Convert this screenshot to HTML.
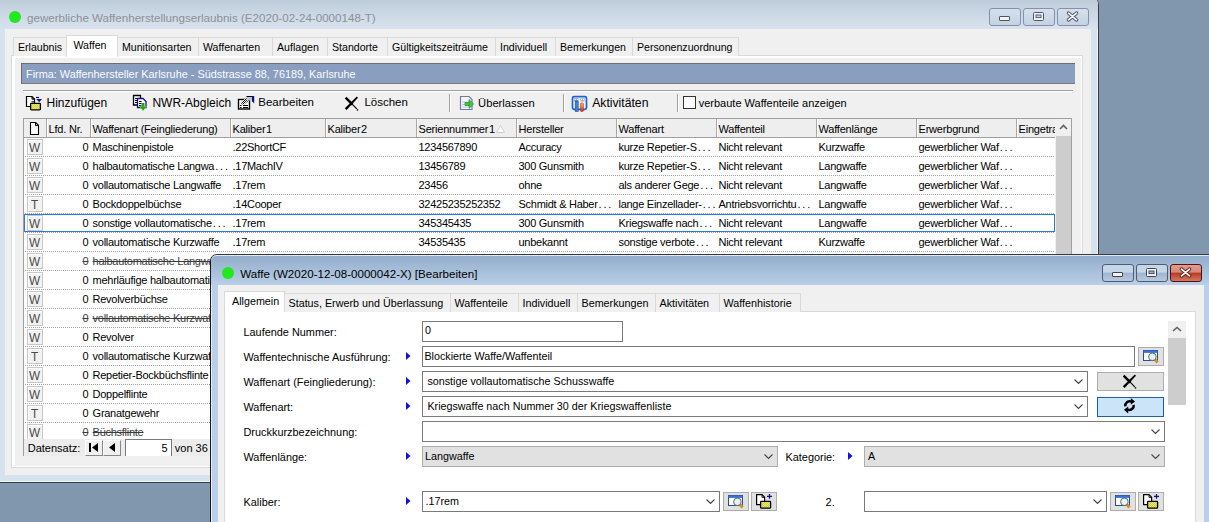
<!DOCTYPE html><html><head><meta charset="utf-8"><style>
*{box-sizing:border-box;margin:0;padding:0}
html,body{width:1209px;height:522px;overflow:hidden;background:#8097ae;font-family:"Liberation Sans",sans-serif;font-size:11px;color:#000}
.a{position:absolute}
.t{position:absolute;white-space:nowrap;line-height:1}
.wb{position:absolute;height:18px;width:32px;border:1px solid #8591aa;border-radius:3px;background:linear-gradient(#d5e0ec,#c4d2e2)}
svg{position:absolute;overflow:visible}
</style></head><body>
<div class="a" style="left:0px;top:-3px;width:1099px;height:486px;background:#d7e2ef;border-right:1px solid #3c3c3c;border-bottom:1px solid #3c3c3c;border-top-right-radius:8px"></div>
<div class="a" style="left:1097px;top:3px;width:1px;height:479px;background:#eef4fb"></div>
<div class="a" style="left:0px;top:481px;width:1098px;height:1px;background:#eef4fb"></div>
<div class="a" style="left:0px;top:-3px;width:1098px;height:32px;background:linear-gradient(#bccad8,#d8e3ef);border-top-right-radius:7px"></div>
<div class="a" style="left:9px;top:11px;width:12px;height:12px;border-radius:50%;background:#22e822"></div>
<div class="t" style="left:27px;top:12.18px;font-size:11.6px;color:#8c9096;">gewerbliche Waffenherstellungserlaubnis (E2020-02-24-0000148-T)</div>
<div class="wb" style="left:989px;top:8px"></div>
<div class="wb" style="left:1023px;top:8px"></div>
<div class="wb" style="left:1057px;top:8px"></div>
<div class="a" style="left:999px;top:16px;width:11px;height:5px;background:#f2f2f2;border:1px solid #4e5566;border-radius:1px"></div>
<svg style="left:1033px;top:12px" width="12" height="9"><rect x="0.5" y="0.5" width="10" height="8" rx="1" fill="#f2f2f2" stroke="#4e5566"/><rect x="3" y="3" width="5" height="2.6" fill="#c9d4e2" stroke="#4e5566" stroke-width="0.9"/></svg>
<svg style="left:1067px;top:12px" width="11" height="9"><path d="M1.5 1.2 L9.5 7.8 M9.5 1.2 L1.5 7.8" stroke="#4e5566" stroke-width="3.6" stroke-linecap="round"/><path d="M1.5 1.2 L9.5 7.8 M9.5 1.2 L1.5 7.8" stroke="#f6f6f6" stroke-width="1.7" stroke-linecap="round"/></svg>
<div class="a" style="left:5px;top:29px;width:1086px;height:446px;background:#f0f0f0"></div>
<div class="a" style="left:11px;top:55px;width:1072px;height:413px;border:1px solid #d9d9d9;background:#f0f0f0"></div>
<div class="a" style="left:12px;top:56px;width:3px;height:411px;background:#fff"></div>
<div class="a" style="left:12px;top:56px;width:1070px;height:2px;background:#fff"></div>
<div class="a" style="left:1081px;top:56px;width:1px;height:411px;background:#fff"></div>
<div class="a" style="left:12px;top:466px;width:1070px;height:1px;background:#fff"></div>
<div class="a" style="left:13px;top:37px;width:54px;height:19px;border:1px solid #d9d9d9;border-bottom:none;background:#f0f0f0"></div>
<div class="t" style="left:18px;top:41.83px;font-size:10.6px;color:#000;">Erlaubnis</div>
<div class="a" style="left:117px;top:37px;width:82px;height:19px;border:1px solid #d9d9d9;border-bottom:none;background:#f0f0f0"></div>
<div class="t" style="left:122px;top:41.83px;font-size:10.6px;color:#000;">Munitionsarten</div>
<div class="a" style="left:198px;top:37px;width:75px;height:19px;border:1px solid #d9d9d9;border-bottom:none;background:#f0f0f0"></div>
<div class="t" style="left:203px;top:41.83px;font-size:10.6px;color:#000;">Waffenarten</div>
<div class="a" style="left:272px;top:37px;width:56px;height:19px;border:1px solid #d9d9d9;border-bottom:none;background:#f0f0f0"></div>
<div class="t" style="left:277px;top:41.83px;font-size:10.6px;color:#000;">Auflagen</div>
<div class="a" style="left:327px;top:37px;width:61px;height:19px;border:1px solid #d9d9d9;border-bottom:none;background:#f0f0f0"></div>
<div class="t" style="left:332px;top:41.83px;font-size:10.6px;color:#000;">Standorte</div>
<div class="a" style="left:387px;top:37px;width:109px;height:19px;border:1px solid #d9d9d9;border-bottom:none;background:#f0f0f0"></div>
<div class="t" style="left:392px;top:41.83px;font-size:10.6px;color:#000;">Gültigkeitszeiträume</div>
<div class="a" style="left:495px;top:37px;width:61px;height:19px;border:1px solid #d9d9d9;border-bottom:none;background:#f0f0f0"></div>
<div class="t" style="left:500px;top:41.83px;font-size:10.6px;color:#000;">Individuell</div>
<div class="a" style="left:555px;top:37px;width:78px;height:19px;border:1px solid #d9d9d9;border-bottom:none;background:#f0f0f0"></div>
<div class="t" style="left:560px;top:41.83px;font-size:10.6px;color:#000;">Bemerkungen</div>
<div class="a" style="left:632px;top:37px;width:107px;height:19px;border:1px solid #d9d9d9;border-bottom:none;background:#f0f0f0"></div>
<div class="t" style="left:637px;top:41.83px;font-size:10.6px;color:#000;">Personenzuordnung</div>
<div class="a" style="left:66px;top:35px;width:52px;height:22px;border:1px solid #d9d9d9;border-bottom:none;background:#fff"></div>
<div class="t" style="left:73.5px;top:39.73px;font-size:10.6px;color:#000;">Waffen</div>
<div class="a" style="left:21px;top:63px;width:1054px;height:21px;background:#8a9ec0;border-top:1px solid #6e6e6e;border-left:1px solid #6e6e6e;border-bottom:1px solid #7a7a7a"></div>
<div class="t" style="left:26px;top:68.81px;font-size:10.86px;color:#fafcff;">Firma: Waffenhersteller Karlsruhe - Südstrasse 88, 76189, Karlsruhe</div>
<div class="a" style="left:23px;top:90px;width:1050px;height:1px;background:#a0a0a0"></div>
<div class="a" style="left:23px;top:91px;width:1050px;height:1px;background:#fff"></div>
<div class="t" style="left:46.5px;top:96.84px;font-size:12px;color:#000;">Hinzufügen</div>
<div class="t" style="left:152.4px;top:96.84px;font-size:12px;color:#000;">NWR-Abgleich</div>
<div class="t" style="left:258.3px;top:97.27px;font-size:11.5px;color:#000;">Bearbeiten</div>
<div class="t" style="left:364.4px;top:97.27px;font-size:11.5px;color:#000;">Löschen</div>
<div class="t" style="left:478.1px;top:97.52px;font-size:11.2px;color:#000;">Überlassen</div>
<div class="t" style="left:592.2px;top:96.67px;font-size:12.2px;color:#000;">Aktivitäten</div>
<div class="a" style="left:449px;top:94px;width:1px;height:18px;background:#a0a0a0"></div>
<div class="a" style="left:450px;top:94px;width:1px;height:18px;background:#fff"></div>
<div class="a" style="left:563px;top:94px;width:1px;height:18px;background:#a0a0a0"></div>
<div class="a" style="left:564px;top:94px;width:1px;height:18px;background:#fff"></div>
<div class="a" style="left:677px;top:94px;width:1px;height:18px;background:#a0a0a0"></div>
<div class="a" style="left:678px;top:94px;width:1px;height:18px;background:#fff"></div>
<div class="a" style="left:683px;top:96px;width:13px;height:13px;border:1px solid #333;background:#fff"></div>
<div class="t" style="left:698.7px;top:97.69px;font-size:11px;color:#000;">verbaute Waffenteile anzeigen</div>
<svg style="left:344px;top:96px" width="15" height="15" viewBox="0 0 15 15"><path d="M0.8 2.4 L2.4 0.8 L9.4 7.6 L7.6 9.4 z" fill="#000"/><path d="M7.8 7.0 L13.2 12.4 L12.4 13.2 L7.0 7.8z" fill="#000"/><rect x="12.8" y="13.2" width="1.4" height="1.4" fill="#000"/><path d="M14 1.8 L12.8 0.6 L0.8 12.2 L2.6 14 z" fill="#000"/></svg>

<svg style="left:25px;top:95px" width="18" height="17"><defs><pattern id="ydot" width="2" height="2" patternUnits="userSpaceOnUse"><rect width="2" height="2" fill="#f8f800"/><rect width="1" height="1" fill="#c0c0b0"/><rect x="1" y="1" width="1" height="1" fill="#c0c0b0"/></pattern></defs><path d="M1.5 1.5 H7 L9.5 4 V11.5 H1.5 Z" fill="#fff" stroke="#000" stroke-width="1.2"/><path d="M7 1.8 V4.2 H9.4" fill="none" stroke="#000" stroke-width="1"/><path d="M6.5 6.8 h3 v1.5" fill="#e8e830" stroke="#000" stroke-width="1"/><rect x="5.6" y="8.3" width="9.8" height="6.5" rx="0.8" fill="url(#ydot)" stroke="#000" stroke-width="1.3"/><path d="M11 2.5 h3" stroke="#10108a" stroke-width="1.2"/><path d="M11.3 4 L17 4 L14.2 7.2 z" fill="#10108a"/></svg>
<svg style="left:132px;top:94px" width="17" height="18"><path d="M1.5 1.5 H8.5 V11 H1.5 Z" fill="#fff" stroke="#000" stroke-width="1.3"/><path d="M3 4.5 h3 M3 6.5 h3 M3 8.5 h3" stroke="#000"/><path d="M5.5 4.5 H11 L14 7.5 V13.5 H5.5 Z" fill="#fff" stroke="#10108a" stroke-width="1.3"/><path d="M7 7.5 h2.5 M7 9.5 h2.5 M7 11.5 h2.5" stroke="#000"/><rect x="9.6" y="9" width="2.8" height="4" fill="#1f9a1f"/><path d="M7.6 12.2 L14.6 12.2 L11 16.8 z" fill="#1f9a1f" stroke="#7ae03a" stroke-width="0.6"/></svg>
<svg style="left:237px;top:95px" width="19" height="16"><defs><pattern id="chk" width="2" height="2" patternUnits="userSpaceOnUse"><rect width="2" height="2" fill="#fff"/><rect width="1" height="1" fill="#000"/><rect x="1" y="1" width="1" height="1" fill="#000"/></pattern></defs><rect x="1.5" y="4.5" width="11" height="9.5" fill="#fff" stroke="#000" stroke-width="1.4"/><path d="M3 10.5 h1.6 M6 10.5 h5 M3 12.5 h1.6 M6 12.5 h5" stroke="#000"/><path d="M3.5 8 L9.5 2 L12.5 5 L6.5 10 z" fill="url(#chk)"/><rect x="9.5" y="2" width="5.5" height="3.5" fill="#c4c4c4"/><path d="M9.5 1.5 H15" stroke="#000" stroke-width="1"/><path d="M15 1 h2.2 v7.4 l-1.1 -1.2 l-1.1 -0.6 z" fill="#10108a"/></svg>
<svg style="left:459px;top:95px" width="16" height="16"><path d="M1.5 1.5 H10 L13 4.5 V14.5 H1.5 Z" fill="#f4f5fb" stroke="#6c7ca6" stroke-width="1.2"/><path d="M3 7 h5 M3 9.5 h3 M3 12 h6" stroke="#c0c8e0"/><rect x="6" y="7.4" width="4.5" height="3.2" fill="#46c846" stroke="#1a8a1a" stroke-width="0.6"/><path d="M10 4.6 L14.6 9 L10 13.4 z" fill="#46c846" stroke="#1a8a1a" stroke-width="0.7"/></svg>
<svg style="left:571px;top:95px" width="17" height="17"><defs><linearGradient id="og" x1="0" y1="0" x2="0" y2="1"><stop offset="0" stop-color="#ffc040"/><stop offset="1" stop-color="#d82a10"/></linearGradient></defs><rect x="1.5" y="1.6" width="14" height="12.8" rx="1.6" fill="#eef5fe" stroke="#1c64d8" stroke-width="1.7"/><path d="M2.6 3.2 h5 l-0.6 3.2 h-3.6 z" fill="#a4a4a4"/><path d="M8.6 3.2 h5.6 l-1 3.4 h-3.6 z" fill="#b0b0b0"/><path d="M3.6 4 h1 v1 h-1z M6 4 h1 v1 h-1z M10 4 h1 v1 h-1z M12.2 4 h1 v1 h-1z" fill="#fff"/><rect x="4.2" y="6" width="3" height="10.5" fill="#3c82dc" stroke="#1d4a90" stroke-width="0.6"/><rect x="9.4" y="8" width="3" height="8.5" rx="1" fill="url(#og)" stroke="#a02010" stroke-width="0.5"/></svg>

<div class="a" style="left:23px;top:118px;width:1049px;height:338px;border:1px solid #a0a0a0;border-bottom:none;background:#fff"></div>
<div class="a" style="left:24px;top:119px;width:1031px;height:19px;background:#eeeeee;border-bottom:1px solid #a0a0a0"></div>
<div class="a" style="left:46px;top:119px;width:1px;height:18px;background:#a9a9a9"></div>
<div class="a" style="left:47px;top:119px;width:1px;height:18px;background:#fff"></div>
<div class="a" style="left:90px;top:119px;width:1px;height:18px;background:#a9a9a9"></div>
<div class="a" style="left:91px;top:119px;width:1px;height:18px;background:#fff"></div>
<div class="a" style="left:230px;top:119px;width:1px;height:18px;background:#a9a9a9"></div>
<div class="a" style="left:231px;top:119px;width:1px;height:18px;background:#fff"></div>
<div class="a" style="left:325px;top:119px;width:1px;height:18px;background:#a9a9a9"></div>
<div class="a" style="left:326px;top:119px;width:1px;height:18px;background:#fff"></div>
<div class="a" style="left:416px;top:119px;width:1px;height:18px;background:#a9a9a9"></div>
<div class="a" style="left:417px;top:119px;width:1px;height:18px;background:#fff"></div>
<div class="a" style="left:516px;top:119px;width:1px;height:18px;background:#a9a9a9"></div>
<div class="a" style="left:517px;top:119px;width:1px;height:18px;background:#fff"></div>
<div class="a" style="left:616px;top:119px;width:1px;height:18px;background:#a9a9a9"></div>
<div class="a" style="left:617px;top:119px;width:1px;height:18px;background:#fff"></div>
<div class="a" style="left:716px;top:119px;width:1px;height:18px;background:#a9a9a9"></div>
<div class="a" style="left:717px;top:119px;width:1px;height:18px;background:#fff"></div>
<div class="a" style="left:816px;top:119px;width:1px;height:18px;background:#a9a9a9"></div>
<div class="a" style="left:817px;top:119px;width:1px;height:18px;background:#fff"></div>
<div class="a" style="left:916px;top:119px;width:1px;height:18px;background:#a9a9a9"></div>
<div class="a" style="left:917px;top:119px;width:1px;height:18px;background:#fff"></div>
<div class="a" style="left:1016px;top:119px;width:1px;height:18px;background:#a9a9a9"></div>
<div class="a" style="left:1017px;top:119px;width:1px;height:18px;background:#fff"></div>
<div class="t" style="left:48.5px;top:123.69px;font-size:11px;color:#000;letter-spacing:-0.2px">Lfd. Nr.</div>
<div class="t" style="left:92.5px;top:123.69px;font-size:11px;color:#000;letter-spacing:-0.2px">Waffenart (Feingliederung)</div>
<div class="t" style="left:232.5px;top:123.69px;font-size:11px;color:#000;letter-spacing:-0.2px">Kaliber&#8202;1</div>
<div class="t" style="left:327.5px;top:123.69px;font-size:11px;color:#000;letter-spacing:-0.2px">Kaliber&#8202;2</div>
<div class="t" style="left:418.5px;top:123.69px;font-size:11px;color:#000;letter-spacing:-0.2px">Seriennummer&#8202;1</div>
<div class="t" style="left:518.5px;top:123.69px;font-size:11px;color:#000;letter-spacing:-0.2px">Hersteller</div>
<div class="t" style="left:618.5px;top:123.69px;font-size:11px;color:#000;letter-spacing:-0.2px">Waffenart</div>
<div class="t" style="left:718.5px;top:123.69px;font-size:11px;color:#000;letter-spacing:-0.2px">Waffenteil</div>
<div class="t" style="left:818.5px;top:123.69px;font-size:11px;color:#000;letter-spacing:-0.2px">Waffenlänge</div>
<div class="t" style="left:918.5px;top:123.69px;font-size:11px;color:#000;letter-spacing:-0.2px">Erwerbgrund</div>
<div class="t" style="left:1018.5px;top:123.69px;font-size:11px;color:#000;letter-spacing:-0.2px">Eingetra</div>
<svg style="left:29px;top:122px" width="12" height="13"><path d="M1.5 0.5h5.2l2.8 2.8v9.2h-8z" fill="#fff" stroke="#000" stroke-width="1.1"/><path d="M6.5 0.8v2.8h2.8" fill="none" stroke="#000" stroke-width="1"/></svg>
<svg style="left:496px;top:125px" width="10" height="8"><path d="M0.5 7.5 L4.5 0.5 L8.5 7.5z" fill="#fcfcfc" stroke="#cfcfcf"/></svg>
<div class="a" style="left:1055px;top:119px;width:16px;height:336px;background:#f0f0f0"></div>
<div class="a" style="left:1056px;top:136px;width:15px;height:119px;background:#cdcdcd"></div>
<svg style="left:1059px;top:124px" width="9" height="6"><path d="M1 5 L4.5 1.5 L8 5" fill="none" stroke="#606060" stroke-width="1.6"/></svg>
<div class="a" style="left:1071px;top:118px;width:1px;height:338px;background:#a0a0a0"></div>
<div class="a" style="left:24px;top:156px;width:1031px;height:1px;background-image:repeating-linear-gradient(90deg,transparent 0 1px,#a0a0a0 1px 2px)"></div>
<div class="a" style="left:27px;top:139px;width:16px;height:16px;border:1px solid #c8c8c8;background:#f2f2f2;box-shadow:inset 1px 1px 0 #fff"></div>
<div class="t" style="left:28.8px;top:141.50px;font-size:12.4px;color:#4a4a4a;transform:scaleX(0.95);transform-origin:0 0">W</div>
<div class="t" style="left:82.5px;top:141.69px;font-size:11px;color:#000;letter-spacing:-0.27px">0</div>
<div class="t" style="left:92.6px;top:141.69px;font-size:11px;color:#000;letter-spacing:-0.27px">Maschinenpistole</div>
<div class="t" style="left:232.5px;top:141.69px;font-size:11px;color:#000;letter-spacing:-0.27px">.22ShortCF</div>
<div class="t" style="left:418.5px;top:141.69px;font-size:11px;color:#000;letter-spacing:-0.27px">1234567890</div>
<div class="t" style="left:518.5px;top:141.69px;font-size:11px;color:#000;letter-spacing:-0.27px">Accuracy</div>
<div class="t" style="left:618.5px;top:141.69px;font-size:11px;color:#000;letter-spacing:-0.27px">kurze Repetier-S<span style="letter-spacing:1.8px;margin-left:1px">...</span></div>
<div class="t" style="left:718.5px;top:141.69px;font-size:11px;color:#000;letter-spacing:-0.27px">Nicht relevant</div>
<div class="t" style="left:818.5px;top:141.69px;font-size:11px;color:#000;letter-spacing:-0.27px">Kurzwaffe</div>
<div class="t" style="left:918.5px;top:141.69px;font-size:11px;color:#000;letter-spacing:-0.27px">gewerblicher Waf<span style="letter-spacing:1.8px;margin-left:1px">...</span></div>
<div class="a" style="left:24px;top:175px;width:1031px;height:1px;background-image:repeating-linear-gradient(90deg,transparent 0 1px,#a0a0a0 1px 2px)"></div>
<div class="a" style="left:27px;top:158px;width:16px;height:16px;border:1px solid #c8c8c8;background:#f2f2f2;box-shadow:inset 1px 1px 0 #fff"></div>
<div class="t" style="left:28.8px;top:160.50px;font-size:12.4px;color:#4a4a4a;transform:scaleX(0.95);transform-origin:0 0">W</div>
<div class="t" style="left:82.5px;top:160.69px;font-size:11px;color:#000;letter-spacing:-0.27px">0</div>
<div class="t" style="left:92.6px;top:160.69px;font-size:11px;color:#000;letter-spacing:-0.27px">halbautomatische Langwa<span style="letter-spacing:1.8px;margin-left:1px">...</span></div>
<div class="t" style="left:232.5px;top:160.69px;font-size:11px;color:#000;letter-spacing:-0.27px">.17MachIV</div>
<div class="t" style="left:418.5px;top:160.69px;font-size:11px;color:#000;letter-spacing:-0.27px">13456789</div>
<div class="t" style="left:518.5px;top:160.69px;font-size:11px;color:#000;letter-spacing:-0.27px">300 Gunsmith</div>
<div class="t" style="left:618.5px;top:160.69px;font-size:11px;color:#000;letter-spacing:-0.27px">kurze Repetier-S<span style="letter-spacing:1.8px;margin-left:1px">...</span></div>
<div class="t" style="left:718.5px;top:160.69px;font-size:11px;color:#000;letter-spacing:-0.27px">Nicht relevant</div>
<div class="t" style="left:818.5px;top:160.69px;font-size:11px;color:#000;letter-spacing:-0.27px">Langwaffe</div>
<div class="t" style="left:918.5px;top:160.69px;font-size:11px;color:#000;letter-spacing:-0.27px">gewerblicher Waf<span style="letter-spacing:1.8px;margin-left:1px">...</span></div>
<div class="a" style="left:24px;top:194px;width:1031px;height:1px;background-image:repeating-linear-gradient(90deg,transparent 0 1px,#a0a0a0 1px 2px)"></div>
<div class="a" style="left:27px;top:177px;width:16px;height:16px;border:1px solid #c8c8c8;background:#f2f2f2;box-shadow:inset 1px 1px 0 #fff"></div>
<div class="t" style="left:28.8px;top:179.50px;font-size:12.4px;color:#4a4a4a;transform:scaleX(0.95);transform-origin:0 0">W</div>
<div class="t" style="left:82.5px;top:179.69px;font-size:11px;color:#000;letter-spacing:-0.27px">0</div>
<div class="t" style="left:92.6px;top:179.69px;font-size:11px;color:#000;letter-spacing:-0.27px">vollautomatische Langwaffe</div>
<div class="t" style="left:232.5px;top:179.69px;font-size:11px;color:#000;letter-spacing:-0.27px">.17rem</div>
<div class="t" style="left:418.5px;top:179.69px;font-size:11px;color:#000;letter-spacing:-0.27px">23456</div>
<div class="t" style="left:518.5px;top:179.69px;font-size:11px;color:#000;letter-spacing:-0.27px">ohne</div>
<div class="t" style="left:618.5px;top:179.69px;font-size:11px;color:#000;letter-spacing:-0.27px">als anderer Gege<span style="letter-spacing:1.8px;margin-left:1px">...</span></div>
<div class="t" style="left:718.5px;top:179.69px;font-size:11px;color:#000;letter-spacing:-0.27px">Nicht relevant</div>
<div class="t" style="left:818.5px;top:179.69px;font-size:11px;color:#000;letter-spacing:-0.27px">Langwaffe</div>
<div class="t" style="left:918.5px;top:179.69px;font-size:11px;color:#000;letter-spacing:-0.27px">gewerblicher Waf<span style="letter-spacing:1.8px;margin-left:1px">...</span></div>
<div class="a" style="left:24px;top:213px;width:1031px;height:1px;background-image:repeating-linear-gradient(90deg,transparent 0 1px,#a0a0a0 1px 2px)"></div>
<div class="a" style="left:27px;top:196px;width:16px;height:16px;border:1px solid #c8c8c8;background:#f2f2f2;box-shadow:inset 1px 1px 0 #fff"></div>
<div class="t" style="left:31px;top:198.50px;font-size:12.4px;color:#4a4a4a;transform:scaleX(0.95);transform-origin:0 0">T</div>
<div class="t" style="left:82.5px;top:198.69px;font-size:11px;color:#000;letter-spacing:-0.27px">0</div>
<div class="t" style="left:92.6px;top:198.69px;font-size:11px;color:#000;letter-spacing:-0.27px">Bockdoppelbüchse</div>
<div class="t" style="left:232.5px;top:198.69px;font-size:11px;color:#000;letter-spacing:-0.27px">.14Cooper</div>
<div class="t" style="left:418.5px;top:198.69px;font-size:11px;color:#000;letter-spacing:-0.27px">32425235252352</div>
<div class="t" style="left:518.5px;top:198.69px;font-size:11px;color:#000;letter-spacing:-0.27px">Schmidt &amp; Haber<span style="letter-spacing:1.8px;margin-left:1px">...</span></div>
<div class="t" style="left:618.5px;top:198.69px;font-size:11px;color:#000;letter-spacing:-0.27px">lange Einzellader-<span style="letter-spacing:1.8px;margin-left:1px">...</span></div>
<div class="t" style="left:718.5px;top:198.69px;font-size:11px;color:#000;letter-spacing:-0.27px">Antriebsvorrichtu<span style="letter-spacing:1.8px;margin-left:1px">...</span></div>
<div class="t" style="left:818.5px;top:198.69px;font-size:11px;color:#000;letter-spacing:-0.27px">Langwaffe</div>
<div class="t" style="left:918.5px;top:198.69px;font-size:11px;color:#000;letter-spacing:-0.27px">gewerblicher Waf<span style="letter-spacing:1.8px;margin-left:1px">...</span></div>
<div class="a" style="left:24px;top:232px;width:1031px;height:1px;background-image:repeating-linear-gradient(90deg,transparent 0 1px,#a0a0a0 1px 2px)"></div>
<div class="a" style="left:27px;top:215px;width:16px;height:16px;border:1px solid #c8c8c8;background:#f2f2f2;box-shadow:inset 1px 1px 0 #fff"></div>
<div class="t" style="left:28.8px;top:217.50px;font-size:12.4px;color:#4a4a4a;transform:scaleX(0.95);transform-origin:0 0">W</div>
<div class="t" style="left:82.5px;top:217.69px;font-size:11px;color:#000;letter-spacing:-0.27px">0</div>
<div class="t" style="left:92.6px;top:217.69px;font-size:11px;color:#000;letter-spacing:-0.27px">sonstige vollautomatische<span style="letter-spacing:1.8px;margin-left:1px">...</span></div>
<div class="t" style="left:232.5px;top:217.69px;font-size:11px;color:#000;letter-spacing:-0.27px">.17rem</div>
<div class="t" style="left:418.5px;top:217.69px;font-size:11px;color:#000;letter-spacing:-0.27px">345345435</div>
<div class="t" style="left:518.5px;top:217.69px;font-size:11px;color:#000;letter-spacing:-0.27px">300 Gunsmith</div>
<div class="t" style="left:618.5px;top:217.69px;font-size:11px;color:#000;letter-spacing:-0.27px">Kriegswaffe nach<span style="letter-spacing:1.8px;margin-left:1px">...</span></div>
<div class="t" style="left:718.5px;top:217.69px;font-size:11px;color:#000;letter-spacing:-0.27px">Nicht relevant</div>
<div class="t" style="left:818.5px;top:217.69px;font-size:11px;color:#000;letter-spacing:-0.27px">Langwaffe</div>
<div class="t" style="left:918.5px;top:217.69px;font-size:11px;color:#000;letter-spacing:-0.27px">gewerblicher Waf<span style="letter-spacing:1.8px;margin-left:1px">...</span></div>
<div class="a" style="left:24px;top:251px;width:1031px;height:1px;background-image:repeating-linear-gradient(90deg,transparent 0 1px,#a0a0a0 1px 2px)"></div>
<div class="a" style="left:27px;top:234px;width:16px;height:16px;border:1px solid #c8c8c8;background:#f2f2f2;box-shadow:inset 1px 1px 0 #fff"></div>
<div class="t" style="left:28.8px;top:236.50px;font-size:12.4px;color:#4a4a4a;transform:scaleX(0.95);transform-origin:0 0">W</div>
<div class="t" style="left:82.5px;top:236.69px;font-size:11px;color:#000;letter-spacing:-0.27px">0</div>
<div class="t" style="left:92.6px;top:236.69px;font-size:11px;color:#000;letter-spacing:-0.27px">vollautomatische Kurzwaffe</div>
<div class="t" style="left:232.5px;top:236.69px;font-size:11px;color:#000;letter-spacing:-0.27px">.17rem</div>
<div class="t" style="left:418.5px;top:236.69px;font-size:11px;color:#000;letter-spacing:-0.27px">34535435</div>
<div class="t" style="left:518.5px;top:236.69px;font-size:11px;color:#000;letter-spacing:-0.27px">unbekannt</div>
<div class="t" style="left:618.5px;top:236.69px;font-size:11px;color:#000;letter-spacing:-0.27px">sonstige verbote<span style="letter-spacing:1.8px;margin-left:1px">...</span></div>
<div class="t" style="left:718.5px;top:236.69px;font-size:11px;color:#000;letter-spacing:-0.27px">Nicht relevant</div>
<div class="t" style="left:818.5px;top:236.69px;font-size:11px;color:#000;letter-spacing:-0.27px">Kurzwaffe</div>
<div class="t" style="left:918.5px;top:236.69px;font-size:11px;color:#000;letter-spacing:-0.27px">gewerblicher Waf<span style="letter-spacing:1.8px;margin-left:1px">...</span></div>
<div class="a" style="left:24px;top:270px;width:1031px;height:1px;background-image:repeating-linear-gradient(90deg,transparent 0 1px,#a0a0a0 1px 2px)"></div>
<div class="a" style="left:27px;top:253px;width:16px;height:16px;border:1px solid #c8c8c8;background:#f2f2f2;box-shadow:inset 1px 1px 0 #fff"></div>
<div class="t" style="left:28.8px;top:255.50px;font-size:12.4px;color:#4a4a4a;transform:scaleX(0.95);transform-origin:0 0">W</div>
<div class="t" style="left:82.5px;top:255.69px;font-size:11px;color:#3c3c3c;letter-spacing:-0.27px;text-decoration:line-through">0</div>
<div class="t" style="left:92.6px;top:255.69px;font-size:11px;color:#3c3c3c;letter-spacing:-0.27px;text-decoration:line-through">halbautomatische Langwaffe</div>
<div class="a" style="left:24px;top:289px;width:1031px;height:1px;background-image:repeating-linear-gradient(90deg,transparent 0 1px,#a0a0a0 1px 2px)"></div>
<div class="a" style="left:27px;top:272px;width:16px;height:16px;border:1px solid #c8c8c8;background:#f2f2f2;box-shadow:inset 1px 1px 0 #fff"></div>
<div class="t" style="left:28.8px;top:274.50px;font-size:12.4px;color:#4a4a4a;transform:scaleX(0.95);transform-origin:0 0">W</div>
<div class="t" style="left:82.5px;top:274.69px;font-size:11px;color:#000;letter-spacing:-0.27px">0</div>
<div class="t" style="left:92.6px;top:274.69px;font-size:11px;color:#000;letter-spacing:-0.27px">mehrläufige halbautomatische</div>
<div class="a" style="left:24px;top:308px;width:1031px;height:1px;background-image:repeating-linear-gradient(90deg,transparent 0 1px,#a0a0a0 1px 2px)"></div>
<div class="a" style="left:27px;top:291px;width:16px;height:16px;border:1px solid #c8c8c8;background:#f2f2f2;box-shadow:inset 1px 1px 0 #fff"></div>
<div class="t" style="left:28.8px;top:293.50px;font-size:12.4px;color:#4a4a4a;transform:scaleX(0.95);transform-origin:0 0">W</div>
<div class="t" style="left:82.5px;top:293.69px;font-size:11px;color:#000;letter-spacing:-0.27px">0</div>
<div class="t" style="left:92.6px;top:293.69px;font-size:11px;color:#000;letter-spacing:-0.27px">Revolverbüchse</div>
<div class="a" style="left:24px;top:327px;width:1031px;height:1px;background-image:repeating-linear-gradient(90deg,transparent 0 1px,#a0a0a0 1px 2px)"></div>
<div class="a" style="left:27px;top:310px;width:16px;height:16px;border:1px solid #c8c8c8;background:#f2f2f2;box-shadow:inset 1px 1px 0 #fff"></div>
<div class="t" style="left:28.8px;top:312.50px;font-size:12.4px;color:#4a4a4a;transform:scaleX(0.95);transform-origin:0 0">W</div>
<div class="t" style="left:82.5px;top:312.69px;font-size:11px;color:#3c3c3c;letter-spacing:-0.27px;text-decoration:line-through">0</div>
<div class="t" style="left:92.6px;top:312.69px;font-size:11px;color:#3c3c3c;letter-spacing:-0.27px;text-decoration:line-through">vollautomatische Kurzwaffe</div>
<div class="a" style="left:24px;top:346px;width:1031px;height:1px;background-image:repeating-linear-gradient(90deg,transparent 0 1px,#a0a0a0 1px 2px)"></div>
<div class="a" style="left:27px;top:329px;width:16px;height:16px;border:1px solid #c8c8c8;background:#f2f2f2;box-shadow:inset 1px 1px 0 #fff"></div>
<div class="t" style="left:28.8px;top:331.50px;font-size:12.4px;color:#4a4a4a;transform:scaleX(0.95);transform-origin:0 0">W</div>
<div class="t" style="left:82.5px;top:331.69px;font-size:11px;color:#000;letter-spacing:-0.27px">0</div>
<div class="t" style="left:92.6px;top:331.69px;font-size:11px;color:#000;letter-spacing:-0.27px">Revolver</div>
<div class="a" style="left:24px;top:365px;width:1031px;height:1px;background-image:repeating-linear-gradient(90deg,transparent 0 1px,#a0a0a0 1px 2px)"></div>
<div class="a" style="left:27px;top:348px;width:16px;height:16px;border:1px solid #c8c8c8;background:#f2f2f2;box-shadow:inset 1px 1px 0 #fff"></div>
<div class="t" style="left:31px;top:350.50px;font-size:12.4px;color:#4a4a4a;transform:scaleX(0.95);transform-origin:0 0">T</div>
<div class="t" style="left:82.5px;top:350.69px;font-size:11px;color:#000;letter-spacing:-0.27px">0</div>
<div class="t" style="left:92.6px;top:350.69px;font-size:11px;color:#000;letter-spacing:-0.27px">vollautomatische Kurzwaffe</div>
<div class="a" style="left:24px;top:384px;width:1031px;height:1px;background-image:repeating-linear-gradient(90deg,transparent 0 1px,#a0a0a0 1px 2px)"></div>
<div class="a" style="left:27px;top:367px;width:16px;height:16px;border:1px solid #c8c8c8;background:#f2f2f2;box-shadow:inset 1px 1px 0 #fff"></div>
<div class="t" style="left:28.8px;top:369.50px;font-size:12.4px;color:#4a4a4a;transform:scaleX(0.95);transform-origin:0 0">W</div>
<div class="t" style="left:82.5px;top:369.69px;font-size:11px;color:#000;letter-spacing:-0.27px">0</div>
<div class="t" style="left:92.6px;top:369.69px;font-size:11px;color:#000;letter-spacing:-0.27px">Repetier-Bockbüchsflinte</div>
<div class="a" style="left:24px;top:403px;width:1031px;height:1px;background-image:repeating-linear-gradient(90deg,transparent 0 1px,#a0a0a0 1px 2px)"></div>
<div class="a" style="left:27px;top:386px;width:16px;height:16px;border:1px solid #c8c8c8;background:#f2f2f2;box-shadow:inset 1px 1px 0 #fff"></div>
<div class="t" style="left:28.8px;top:388.50px;font-size:12.4px;color:#4a4a4a;transform:scaleX(0.95);transform-origin:0 0">W</div>
<div class="t" style="left:82.5px;top:388.69px;font-size:11px;color:#000;letter-spacing:-0.27px">0</div>
<div class="t" style="left:92.6px;top:388.69px;font-size:11px;color:#000;letter-spacing:-0.27px">Doppelflinte</div>
<div class="a" style="left:24px;top:422px;width:1031px;height:1px;background-image:repeating-linear-gradient(90deg,transparent 0 1px,#a0a0a0 1px 2px)"></div>
<div class="a" style="left:27px;top:405px;width:16px;height:16px;border:1px solid #c8c8c8;background:#f2f2f2;box-shadow:inset 1px 1px 0 #fff"></div>
<div class="t" style="left:31px;top:407.50px;font-size:12.4px;color:#4a4a4a;transform:scaleX(0.95);transform-origin:0 0">T</div>
<div class="t" style="left:82.5px;top:407.69px;font-size:11px;color:#000;letter-spacing:-0.27px">0</div>
<div class="t" style="left:92.6px;top:407.69px;font-size:11px;color:#000;letter-spacing:-0.27px">Granatgewehr</div>
<div class="a" style="left:27px;top:424px;width:16px;height:16px;border:1px solid #c8c8c8;background:#f2f2f2;box-shadow:inset 1px 1px 0 #fff"></div>
<div class="t" style="left:28.8px;top:426.50px;font-size:12.4px;color:#4a4a4a;transform:scaleX(0.95);transform-origin:0 0">W</div>
<div class="t" style="left:82.5px;top:426.69px;font-size:11px;color:#3c3c3c;letter-spacing:-0.27px;text-decoration:line-through">0</div>
<div class="t" style="left:92.6px;top:426.69px;font-size:11px;color:#3c3c3c;letter-spacing:-0.27px;text-decoration:line-through">Büchsflinte</div>
<div class="a" style="left:24px;top:214px;width:1031px;height:18px;border:1px solid #2f78dc"></div>
<div class="a" style="left:24px;top:439px;width:1031px;height:17px;background:#ececec"></div>
<div class="t" style="left:27.7px;top:442.69px;font-size:11px;color:#000;">Datensatz:</div>
<div class="a" style="left:85px;top:440px;width:18px;height:16px;background:#f0f0f0;border-right:1px solid #888;border-bottom:1px solid #888;border-top:1px solid #fff;border-left:1px solid #fff"></div>
<div class="a" style="left:103px;top:440px;width:18px;height:16px;background:#f0f0f0;border-right:1px solid #888;border-bottom:1px solid #888;border-top:1px solid #fff;border-left:1px solid #fff"></div>
<svg style="left:89px;top:443px" width="12" height="10"><rect x="0" y="0" width="2" height="9" fill="#000"/><path d="M9 0 L3 4.5 L9 9z" fill="#000"/></svg>
<svg style="left:109px;top:443px" width="8" height="10"><path d="M6 0 L0 4.5 L6 9z" fill="#000"/></svg>
<div class="a" style="left:125px;top:439px;width:47px;height:17px;background:#fff;border-left:1px solid #7a7a7a;border-top:1px solid #7a7a7a;border-right:1px solid #7a7a7a"></div>
<div class="t" style="left:161.5px;top:442.69px;font-size:11px;color:#000;">5</div>
<div class="t" style="left:174.8px;top:442.69px;font-size:11px;color:#000;">von 36</div>
<div class="a" style="left:210px;top:254px;width:1000px;height:270px;background:#bad0ea;border-left:1px solid #1a1a1a;border-top:1px solid #3a3a3a;border-top-left-radius:7px"></div>
<div class="a" style="left:211px;top:262px;width:1px;height:262px;background:#e4eef8"></div>
<div class="a" style="left:211px;top:255px;width:999px;height:30px;background:linear-gradient(#93adca,#b9cfe8);border-top-left-radius:6px;border-top:1px solid #dde8f4"></div>
<div class="a" style="left:222px;top:267px;width:12px;height:12px;border-radius:50%;background:#22e822"></div>
<div class="t" style="left:240.2px;top:267.78px;font-size:11.6px;color:#000;">Waffe (W2020-12-08-0000042-X) [Bearbeiten]</div>
<div class="wb" style="left:1102px;top:264px;height:18px;border-color:#535c6e;background:linear-gradient(#c6d6e9 0,#c6d6e9 45%,#9fb5cf 50%,#b6c9df 100%)"></div>
<div class="wb" style="left:1136px;top:264px;height:18px;border-color:#535c6e;background:linear-gradient(#c6d6e9 0,#c6d6e9 45%,#9fb5cf 50%,#b6c9df 100%)"></div>
<div class="wb" style="left:1170px;top:264px;height:18px;border-color:#4a1515;background:linear-gradient(#e49a8e 0,#d88877 45%,#b83a22 50%,#d37962 100%)"></div>
<div class="a" style="left:1112px;top:272px;width:11px;height:5px;background:#f2f2f2;border:1px solid #3e4452;border-radius:1px"></div>
<svg style="left:1146px;top:268px" width="12" height="9"><rect x="0.5" y="0.5" width="10" height="8" rx="1" fill="#f2f2f2" stroke="#3e4452"/><rect x="3" y="3" width="5" height="2.6" fill="#9fb3cc" stroke="#3e4452" stroke-width="0.9"/></svg>
<svg style="left:1180px;top:268px" width="11" height="9"><path d="M1.5 1.2 L9.5 7.8 M9.5 1.2 L1.5 7.8" stroke="#5a2a22" stroke-width="3.6" stroke-linecap="round"/><path d="M1.5 1.2 L9.5 7.8 M9.5 1.2 L1.5 7.8" stroke="#fbfbfb" stroke-width="1.7" stroke-linecap="round"/></svg>
<div class="a" style="left:218px;top:285px;width:986px;height:240px;background:#f0f0f0"></div>
<div class="a" style="left:1204px;top:285px;width:6px;height:240px;background:#bad0ea"></div>
<div class="a" style="left:224px;top:311px;width:972px;height:220px;background:#fff;border:1px solid #d9d9d9"></div>
<div class="a" style="left:284px;top:293px;width:167px;height:19px;border:1px solid #d9d9d9;border-bottom:none;background:#f0f0f0"></div>
<div class="t" style="left:288.5px;top:297.90px;font-size:10.75px;color:#000;">Status, Erwerb und Überlassung</div>
<div class="a" style="left:450px;top:293px;width:69px;height:19px;border:1px solid #d9d9d9;border-bottom:none;background:#f0f0f0"></div>
<div class="t" style="left:454.5px;top:297.90px;font-size:10.75px;color:#000;">Waffenteile</div>
<div class="a" style="left:518px;top:293px;width:60px;height:19px;border:1px solid #d9d9d9;border-bottom:none;background:#f0f0f0"></div>
<div class="t" style="left:522.5px;top:297.90px;font-size:10.75px;color:#000;">Individuell</div>
<div class="a" style="left:577px;top:293px;width:79px;height:19px;border:1px solid #d9d9d9;border-bottom:none;background:#f0f0f0"></div>
<div class="t" style="left:581.5px;top:297.90px;font-size:10.75px;color:#000;">Bemerkungen</div>
<div class="a" style="left:655px;top:293px;width:65px;height:19px;border:1px solid #d9d9d9;border-bottom:none;background:#f0f0f0"></div>
<div class="t" style="left:659.5px;top:297.90px;font-size:10.75px;color:#000;">Aktivitäten</div>
<div class="a" style="left:719px;top:293px;width:82px;height:19px;border:1px solid #d9d9d9;border-bottom:none;background:#f0f0f0"></div>
<div class="t" style="left:723.5px;top:297.90px;font-size:10.75px;color:#000;">Waffenhistorie</div>
<div class="a" style="left:224px;top:291px;width:61px;height:21px;border:1px solid #d9d9d9;border-bottom:none;background:#fff"></div>
<div class="t" style="left:232px;top:295.70px;font-size:10.75px;color:#000;">Allgemein</div>
<div class="t" style="left:243.5px;top:326.77px;font-size:10.9px;color:#000;">Laufende Nummer:</div>
<div class="t" style="left:243.5px;top:351.77px;font-size:10.9px;color:#000;">Waffentechnische Ausführung:</div>
<div class="t" style="left:243.5px;top:376.77px;font-size:10.9px;color:#000;">Waffenart (Feingliederung):</div>
<div class="t" style="left:243.5px;top:401.77px;font-size:10.9px;color:#000;">Waffenart:</div>
<div class="t" style="left:243.5px;top:426.77px;font-size:10.9px;color:#000;">Druckkurzbezeichnung:</div>
<div class="t" style="left:243.5px;top:451.77px;font-size:10.9px;color:#000;">Waffenlänge:</div>
<div class="t" style="left:243.5px;top:496.77px;font-size:10.9px;color:#000;">Kaliber:</div>
<svg style="left:406px;top:352px" width="5" height="9"><path d="M0 0 L4.5 4 L0 8z" fill="#1010e0"/></svg>
<svg style="left:406px;top:377px" width="5" height="9"><path d="M0 0 L4.5 4 L0 8z" fill="#1010e0"/></svg>
<svg style="left:406px;top:402px" width="5" height="9"><path d="M0 0 L4.5 4 L0 8z" fill="#1010e0"/></svg>
<svg style="left:406px;top:452px" width="5" height="9"><path d="M0 0 L4.5 4 L0 8z" fill="#1010e0"/></svg>
<svg style="left:406px;top:497px" width="5" height="9"><path d="M0 0 L4.5 4 L0 8z" fill="#1010e0"/></svg>
<svg style="left:848px;top:452px" width="5" height="9"><path d="M0 0 L4.5 4 L0 8z" fill="#1010e0"/></svg>
<div class="a" style="left:422px;top:321px;width:201px;height:21px;border:1px solid #7a7a7a;background:#fff"></div>
<div class="t" style="left:425px;top:325.30px;font-size:10.75px;color:#000;">0</div>
<div class="a" style="left:422px;top:346px;width:713px;height:21px;border:1px solid #7a7a7a;background:#fff"></div>
<div class="t" style="left:424.4px;top:350.70px;font-size:10.75px;color:#000;">Blockierte Waffe/Waffenteil</div>
<div class="a" style="left:422px;top:371px;width:666px;height:21px;border:1px solid #7a7a7a;background:#fff"></div>
<div class="t" style="left:427.4px;top:375.70px;font-size:10.75px;color:#000;">sonstige vollautomatische Schusswaffe</div>
<svg style="left:1074px;top:379px" width="9" height="5"><path d="M0.5 0.5 L4.5 4.5 L8.5 0.5" fill="none" stroke="#444" stroke-width="1.1"/></svg>
<div class="a" style="left:422px;top:396px;width:666px;height:21px;border:1px solid #7a7a7a;background:#fff"></div>
<div class="t" style="left:427.4px;top:400.70px;font-size:10.75px;color:#000;">Kriegswaffe nach Nummer 30 der Kriegswaffenliste</div>
<svg style="left:1074px;top:404px" width="9" height="5"><path d="M0.5 0.5 L4.5 4.5 L8.5 0.5" fill="none" stroke="#444" stroke-width="1.1"/></svg>
<div class="a" style="left:422px;top:421px;width:743px;height:21px;border:1px solid #7a7a7a;background:#fff"></div>
<svg style="left:1151px;top:429px" width="9" height="5"><path d="M0.5 0.5 L4.5 4.5 L8.5 0.5" fill="none" stroke="#444" stroke-width="1.1"/></svg>
<div class="a" style="left:422px;top:446px;width:356px;height:21px;border:1px solid #adadad;background:#e1e1e1"></div>
<div class="t" style="left:425px;top:450.70px;font-size:10.75px;color:#000;">Langwaffe</div>
<svg style="left:764px;top:454px" width="9" height="5"><path d="M0.5 0.5 L4.5 4.5 L8.5 0.5" fill="none" stroke="#444" stroke-width="1.1"/></svg>
<div class="t" style="left:785.5px;top:451.77px;font-size:10.9px;color:#000;">Kategorie:</div>
<div class="a" style="left:864px;top:446px;width:301px;height:21px;border:1px solid #adadad;background:#e1e1e1"></div>
<div class="t" style="left:868px;top:450.70px;font-size:10.75px;color:#000;">A</div>
<svg style="left:1151px;top:454px" width="9" height="5"><path d="M0.5 0.5 L4.5 4.5 L8.5 0.5" fill="none" stroke="#444" stroke-width="1.1"/></svg>
<div class="a" style="left:422px;top:491px;width:298px;height:21px;border:1px solid #7a7a7a;background:#fff"></div>
<div class="t" style="left:425.5px;top:495.70px;font-size:10.75px;color:#000;">.17rem</div>
<svg style="left:706px;top:499px" width="9" height="5"><path d="M0.5 0.5 L4.5 4.5 L8.5 0.5" fill="none" stroke="#444" stroke-width="1.1"/></svg>
<div class="t" style="left:825.6px;top:496.67px;font-size:10.9px;color:#000;">2.</div>
<div class="a" style="left:864px;top:491px;width:243px;height:21px;border:1px solid #7a7a7a;background:#fff"></div>
<svg style="left:1093px;top:499px" width="9" height="5"><path d="M0.5 0.5 L4.5 4.5 L8.5 0.5" fill="none" stroke="#444" stroke-width="1.1"/></svg>
<div class="a" style="left:1097px;top:372px;width:67px;height:19px;border:1px solid #adadad;background:#e1e1e1"></div>
<div class="a" style="left:1097px;top:397px;width:67px;height:20px;border:1px solid #1d5fa8;background:#cce4f7"></div>
<svg style="left:1122px;top:374px" width="15" height="15" viewBox="0 0 15 15"><path d="M0.8 2.4 L2.4 0.8 L9.4 7.6 L7.6 9.4 z" fill="#000"/><path d="M7.8 7.0 L13.2 12.4 L12.4 13.2 L7.0 7.8z" fill="#000"/><rect x="12.8" y="13.2" width="1.4" height="1.4" fill="#000"/><path d="M14 1.8 L12.8 0.6 L0.8 12.2 L2.6 14 z" fill="#000"/></svg>
<svg style="left:1123px;top:397px" width="14" height="18"><path d="M2.3 9.4 A4.5 4.5 0 0 1 8.4 4.6" fill="none" stroke="#000" stroke-width="2.5"/><path d="M7.8 1 L12 4.6 L7.8 7.8 z" fill="#000"/><path d="M10.7 7.8 A4.5 4.5 0 0 1 4.6 12.6" fill="none" stroke="#000" stroke-width="2.5"/><path d="M5.2 9.6 L1 12.8 L5.2 16.6 z" fill="#000"/></svg>
<div class="a" style="left:1138px;top:347px;width:26px;height:19px;border:1px solid #adadad;background:#e1e1e1"></div>
<svg style="left:1143px;top:350px" width="17" height="15"><rect x="0.5" y="0.5" width="14" height="10" fill="#fff" stroke="#2a4a9a"/><rect x="0.5" y="0.5" width="14" height="2.4" fill="#3a70da"/><path d="M12 9.6 L14.6 12.6" stroke="#e08a28" stroke-width="3"/><circle cx="9.4" cy="6.8" r="3.8" fill="#e8f0fa" stroke="#4f6f5a" stroke-width="1"/></svg>
<div class="a" style="left:723px;top:492px;width:26px;height:19px;border:1px solid #adadad;background:#e1e1e1"></div>
<svg style="left:728px;top:495px" width="17" height="15"><rect x="0.5" y="0.5" width="14" height="10" fill="#fff" stroke="#2a4a9a"/><rect x="0.5" y="0.5" width="14" height="2.4" fill="#3a70da"/><path d="M12 9.6 L14.6 12.6" stroke="#e08a28" stroke-width="3"/><circle cx="9.4" cy="6.8" r="3.8" fill="#e8f0fa" stroke="#4f6f5a" stroke-width="1"/></svg>
<div class="a" style="left:751px;top:492px;width:26px;height:19px;border:1px solid #adadad;background:#e1e1e1"></div>
<svg style="left:756px;top:494px" width="17" height="16"><path d="M0.6 0.6 H6 L8.6 3.2 V10.6 H0.6 Z" fill="#fff" stroke="#000" stroke-width="1.2"/><rect x="4.6" y="7.4" width="10" height="6.8" rx="0.8" fill="url(#ydot)" stroke="#000" stroke-width="1.3"/><path d="M6 1 V3.4 H8.4" fill="none" stroke="#000" stroke-width="0.9"/><path d="M11 2.4 h5 M13.5 0 v4.8" stroke="#10108a" stroke-width="1.3"/></svg>
<div class="a" style="left:1110px;top:492px;width:26px;height:19px;border:1px solid #adadad;background:#e1e1e1"></div>
<svg style="left:1115px;top:495px" width="17" height="15"><rect x="0.5" y="0.5" width="14" height="10" fill="#fff" stroke="#2a4a9a"/><rect x="0.5" y="0.5" width="14" height="2.4" fill="#3a70da"/><path d="M12 9.6 L14.6 12.6" stroke="#e08a28" stroke-width="3"/><circle cx="9.4" cy="6.8" r="3.8" fill="#e8f0fa" stroke="#4f6f5a" stroke-width="1"/></svg>
<div class="a" style="left:1138px;top:492px;width:26px;height:19px;border:1px solid #adadad;background:#e1e1e1"></div>
<svg style="left:1143px;top:494px" width="17" height="16"><path d="M0.6 0.6 H6 L8.6 3.2 V10.6 H0.6 Z" fill="#fff" stroke="#000" stroke-width="1.2"/><rect x="4.6" y="7.4" width="10" height="6.8" rx="0.8" fill="url(#ydot)" stroke="#000" stroke-width="1.3"/><path d="M6 1 V3.4 H8.4" fill="none" stroke="#000" stroke-width="0.9"/><path d="M11 2.4 h5 M13.5 0 v4.8" stroke="#10108a" stroke-width="1.3"/></svg>
<div class="a" style="left:1168px;top:321px;width:18px;height:200px;background:#fff"></div>
<div class="a" style="left:1168px;top:321px;width:18px;height:17px;background:#f0f0f0"></div>
<div class="a" style="left:1168px;top:338px;width:18px;height:67px;background:#cdcdcd"></div>
<svg style="left:1172px;top:326px" width="10" height="6"><path d="M1 5 L5 1.5 L9 5" fill="none" stroke="#606060" stroke-width="1.6"/></svg>
</body></html>
